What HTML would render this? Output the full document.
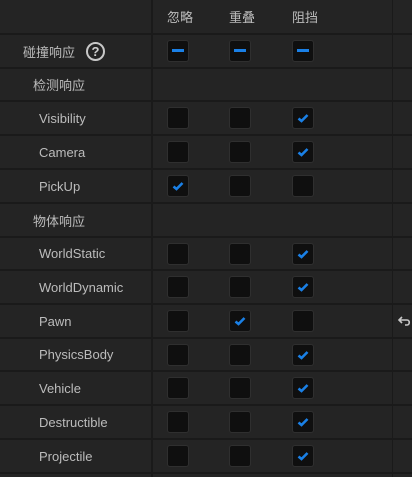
<!DOCTYPE html>
<html style="width:412px;height:477px;overflow:hidden"><head><meta charset="utf-8"><style>
*{margin:0;padding:0;box-sizing:border-box}
body{width:412px;height:477px;background:#242424;overflow:hidden;position:relative;font-family:"Liberation Sans","Noto Sans CJK SC",sans-serif;color:#bcbcbc;font-size:13px}
.r{position:absolute;left:0;width:412px;border-top:2px solid #1a1a1a}
.v1{position:absolute;left:151px;top:0;width:2px;height:477px;background:#1a1a1a}
.v2{position:absolute;left:392px;top:0;width:1px;height:477px;background:#1a1a1a}
.l{position:absolute;top:0;bottom:0;display:flex;align-items:center;white-space:nowrap}
.cb{position:absolute;width:22px;height:22px;border:1px solid #2f2f2f;background:#0f0f0f;border-radius:3px;top:50%;margin-top:-11px}
.c1{left:167px}.c2{left:229px}.c3{left:292px}
.m::after{content:"";position:absolute;left:4px;top:8px;width:12px;height:3px;background:#1a80e6}
.cb svg{position:absolute;left:3px;top:3px}
.h{position:absolute;top:0;height:33px;display:flex;align-items:center;font-size:13px}
</style></head><body>
<div class="h" style="left:167px">忽略</div>
<div class="h" style="left:229px">重叠</div>
<div class="h" style="left:292px">阻挡</div>

<div class="r" style="top:33px;height:34px"><div class="l" style="left:23px">碰撞响应<span style="display:inline-block;margin-left:11px;width:19px;height:19px;border:2px solid #c8c8c8;border-radius:50%;text-align:center;line-height:15px;font-weight:bold;font-size:13px;color:#d0d0d0">?</span></div>
<div class="cb c1 m"></div><div class="cb c2 m"></div><div class="cb c3 m"></div></div>
<div class="r" style="top:67px;height:33px"><div class="l" style="left:33px">检测响应</div></div>
<div class="r" style="top:100px;height:34px"><div class="l" style="left:39px">Visibility</div><div class="cb c1"></div><div class="cb c2"></div><div class="cb c3"><svg width="14" height="14" viewBox="0 0 14 14"><path d="M2.5 7.5 L5.5 10 L11.5 4" stroke="#1a80e6" stroke-width="2.6" fill="none"/></svg></div></div>
<div class="r" style="top:134px;height:34px"><div class="l" style="left:39px">Camera</div><div class="cb c1"></div><div class="cb c2"></div><div class="cb c3"><svg width="14" height="14" viewBox="0 0 14 14"><path d="M2.5 7.5 L5.5 10 L11.5 4" stroke="#1a80e6" stroke-width="2.6" fill="none"/></svg></div></div>
<div class="r" style="top:168px;height:34px"><div class="l" style="left:39px">PickUp</div><div class="cb c1"><svg width="14" height="14" viewBox="0 0 14 14"><path d="M2.5 7.5 L5.5 10 L11.5 4" stroke="#1a80e6" stroke-width="2.6" fill="none"/></svg></div><div class="cb c2"></div><div class="cb c3"></div></div>
<div class="r" style="top:202px;height:34px"><div class="l" style="left:33px">物体响应</div></div>
<div class="r" style="top:236px;height:33px"><div class="l" style="left:39px">WorldStatic</div><div class="cb c1"></div><div class="cb c2"></div><div class="cb c3"><svg width="14" height="14" viewBox="0 0 14 14"><path d="M2.5 7.5 L5.5 10 L11.5 4" stroke="#1a80e6" stroke-width="2.6" fill="none"/></svg></div></div>
<div class="r" style="top:269px;height:34px"><div class="l" style="left:39px">WorldDynamic</div><div class="cb c1"></div><div class="cb c2"></div><div class="cb c3"><svg width="14" height="14" viewBox="0 0 14 14"><path d="M2.5 7.5 L5.5 10 L11.5 4" stroke="#1a80e6" stroke-width="2.6" fill="none"/></svg></div></div>
<div class="r" style="top:303px;height:34px"><div class="l" style="left:39px">Pawn</div><div class="cb c1"></div><div class="cb c2"><svg width="14" height="14" viewBox="0 0 14 14"><path d="M2.5 7.5 L5.5 10 L11.5 4" stroke="#1a80e6" stroke-width="2.6" fill="none"/></svg></div><div class="cb c3"></div>
<svg style="position:absolute;left:397px;top:8px" width="16" height="16" viewBox="0 0 16 16"><path d="M5 4 L2 7 L5 10 M2 7 H10 C13 7 13 12 10 12 H8" stroke="#c8c8c8" stroke-width="1.6" fill="none"/></svg></div>
<div class="r" style="top:337px;height:33px"><div class="l" style="left:39px">PhysicsBody</div><div class="cb c1"></div><div class="cb c2"></div><div class="cb c3"><svg width="14" height="14" viewBox="0 0 14 14"><path d="M2.5 7.5 L5.5 10 L11.5 4" stroke="#1a80e6" stroke-width="2.6" fill="none"/></svg></div></div>
<div class="r" style="top:370px;height:34px"><div class="l" style="left:39px">Vehicle</div><div class="cb c1"></div><div class="cb c2"></div><div class="cb c3"><svg width="14" height="14" viewBox="0 0 14 14"><path d="M2.5 7.5 L5.5 10 L11.5 4" stroke="#1a80e6" stroke-width="2.6" fill="none"/></svg></div></div>
<div class="r" style="top:404px;height:34px"><div class="l" style="left:39px">Destructible</div><div class="cb c1"></div><div class="cb c2"></div><div class="cb c3"><svg width="14" height="14" viewBox="0 0 14 14"><path d="M2.5 7.5 L5.5 10 L11.5 4" stroke="#1a80e6" stroke-width="2.6" fill="none"/></svg></div></div>
<div class="r" style="top:438px;height:34px"><div class="l" style="left:39px">Projectile</div><div class="cb c1"></div><div class="cb c2"></div><div class="cb c3"><svg width="14" height="14" viewBox="0 0 14 14"><path d="M2.5 7.5 L5.5 10 L11.5 4" stroke="#1a80e6" stroke-width="2.6" fill="none"/></svg></div></div>
<div class="r" style="top:472px;height:5px;overflow:hidden"></div>
<div class="v1"></div><div class="v2"></div>
</body></html>
